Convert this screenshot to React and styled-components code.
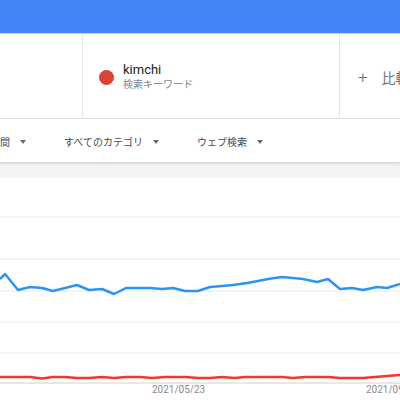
import styled, { createGlobalStyle } from 'styled-components';

const GlobalStyle = createGlobalStyle`
  html, body {
    margin: 0;
    padding: 0;
    background: #ffffff;
    overflow: hidden;
  }
  body {
    font-family: Roboto, 'Noto Sans CJK JP', sans-serif;
  }
`;

const Page = styled.div`
  width: 400px;
  height: 400px;
  overflow: hidden;
  display: flex;
  flex-direction: column;
  background: #f4f4f4;
`;

const TopBar = styled.div`
  height: 33px;
  flex: none;
  background: #4285f4;
  border-bottom: 1px solid #d6d9de;
`;

const TermsRow = styled.div`
  height: 84px;
  flex: none;
  display: flex;
  background: #ffffff;
  border-bottom: 1px solid #e3e3e3;
`;

const TermCell = styled.div`
  width: ${({ $w }) => ($w ? `${$w}px` : 'auto')};
  flex: ${({ $w }) => ($w ? 'none' : '1')};
  border-right: ${({ $divider }) => ($divider ? '1px solid #e6e6e6' : 'none')};
  display: flex;
  align-items: center;
  padding-left: ${({ $pad }) => $pad || 0}px;
  box-sizing: border-box;
  white-space: nowrap;
  overflow: hidden;
`;

const Dot = styled.span`
  width: 15px;
  height: 15px;
  border-radius: 50%;
  background: ${({ $color }) => $color};
  flex: none;
  margin-right: 9px;
  margin-top: 2px;
`;

const TermText = styled.div`
  display: flex;
  flex-direction: column;
  margin-top: 1px;
`;

const TermName = styled.span`
  font-size: 13px;
  color: #202124;
  line-height: 16px;
`;

const TermSub = styled.span`
  font-size: 10px;
  color: #80868b;
  line-height: 14px;
`;

const AddTerm = styled.span`
  font-size: 14px;
  color: #70757a;
  display: flex;
  align-items: center;
  gap: 14px;
  margin-top: 1px;
`;

const Plus = styled.span`
  font-size: 17px;
  font-weight: 300;
  color: #6b6f74;
`;

const FilterRow = styled.div`
  height: 43px;
  flex: none;
  display: flex;
  align-items: center;
  gap: 38px;
  margin-left: -10px;
  background: #ffffff;
  border-bottom: 1px solid #dcdcdc;
  box-shadow: 0 1px 2px rgba(0, 0, 0, 0.12);
  white-space: nowrap;
  position: relative;
  z-index: 1;
`;

const Filter = styled.span`
  font-size: 10px;
  color: #44474b;
  display: flex;
  align-items: center;
  gap: 10px;
  margin-top: 2px;
`;

const Caret = styled.span`
  width: 0;
  height: 0;
  border-left: 3px solid transparent;
  border-right: 3px solid transparent;
  border-top: 4px solid #6b6b6b;
`;

const Gap = styled.div`
  height: 15px;
  flex: none;
`;

const ChartCard = styled.div`
  flex: 1;
  background: #ffffff;
  position: relative;
`;

const AxisLabel = styled.span`
  position: absolute;
  top: 206px;
  left: ${({ $x }) => $x}px;
  font-size: 10px;
  color: #8a8a8a;
  font-family: Roboto, sans-serif;
  white-space: nowrap;
`;

const blue = [
  [0, 279], [5, 274], [18, 290], [30, 287], [42, 288], [53, 291], [65, 288],
  [77, 285], [89, 290], [102, 289], [114, 294], [126, 288], [138, 288],
  [150, 288], [162, 289], [173, 288], [185, 291], [198, 291], [210, 287],
  [222, 286], [233, 285], [247, 283], [258, 281], [268, 279], [282, 277],
  [293, 278], [303, 279], [317, 282], [328, 279], [340, 289], [352, 288],
  [363, 290], [377, 287], [387, 288], [400, 284],
];

const red = [
  [0, 377], [12, 377], [30, 377], [42, 378.5], [53, 377], [65, 377], [77, 378],
  [89, 378], [102, 377], [114, 378], [126, 377], [140, 377], [152, 378],
  [165, 377], [185, 377], [198, 378], [210, 378], [222, 377], [234, 378],
  [246, 377], [258, 377], [270, 377], [282, 377], [293, 378], [305, 377],
  [317, 377], [328, 377], [340, 378], [352, 378], [363, 378], [375, 377],
  [387, 376], [400, 375],
];

const TOP = 178;
const toPoints = pts => pts.map(([x, y]) => `${x},${y - TOP}`).join(' ');
const gridLines = [39, 81, 113, 144, 175];

export default function App() {
  return (
    <>
      <GlobalStyle />
      <Page>
        <TopBar />
        <TermsRow>
          <TermCell $w={83} $divider />
          <TermCell $w={257} $divider $pad={16}>
            <Dot $color='#db4437' />
            <TermText>
              <TermName>kimchi</TermName>
              <TermSub>検索キーワード</TermSub>
            </TermText>
          </TermCell>
          <TermCell $pad={18}>
            <AddTerm>
              <Plus>+</Plus>
              比較
            </AddTerm>
          </TermCell>
        </TermsRow>
        <FilterRow>
          <Filter>
            期間<Caret />
          </Filter>
          <Filter>
            すべてのカテゴリ<Caret />
          </Filter>
          <Filter>
            ウェブ検索<Caret />
          </Filter>
        </FilterRow>
        <Gap />
        <ChartCard>
          <svg width='400' height='222' viewBox='0 0 400 222'>
            {gridLines.map(y => (
              <line key={y} x1='0' x2='400' y1={y} y2={y} stroke='#ebebeb' strokeWidth='1' />
            ))}
            <line x1='0' x2='400' y1='205' y2='205' stroke='#d0d0d0' strokeWidth='1' />
            <polyline
              points={toPoints(blue)}
              fill='none'
              stroke='#2b95f3'
              strokeWidth='2.5'
              strokeLinejoin='round'
            />
            <polyline
              points={toPoints(red)}
              fill='none'
              stroke='#f0392c'
              strokeWidth='2.5'
              strokeLinejoin='round'
            />
          </svg>
          <AxisLabel $x={152}>2021/05/23</AxisLabel>
          <AxisLabel $x={366}>2021/09/05</AxisLabel>
        </ChartCard>
      </Page>
    </>
  );
}
